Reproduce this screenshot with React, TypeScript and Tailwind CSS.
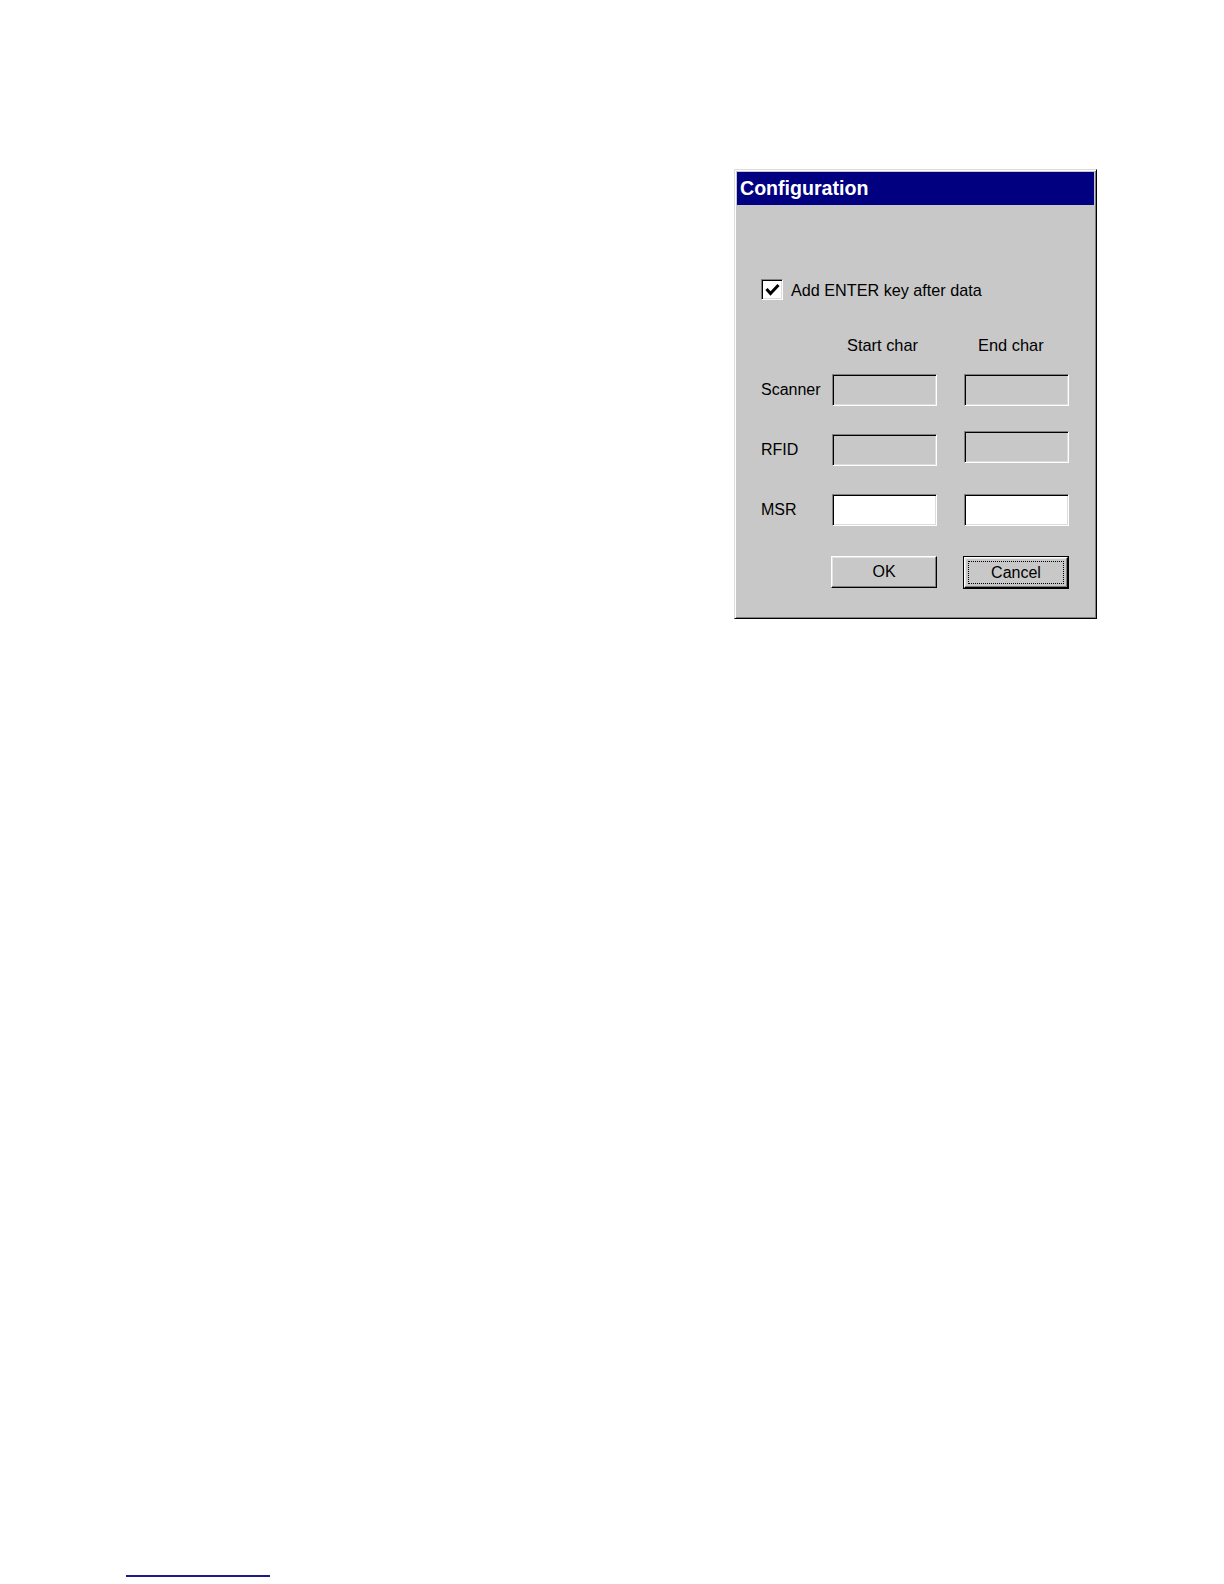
import React from "react";

const sunken =
  "border border-t-[#808080] border-l-[#808080] border-r-white border-b-white shadow-[inset_1px_1px_0_#000,inset_-1px_-1px_0_#dcdcdc]";
const raised =
  "border border-t-white border-l-white border-r-black border-b-black shadow-[inset_-1px_-1px_0_#808080,inset_1px_1px_0_#e4e4e4]";

function Field({ enabled, className = "" }: { enabled?: boolean; className?: string }) {
  return (
    <div
      className={`w-[105px] h-[32px] ${sunken} ${enabled ? "bg-white" : "bg-[#c8c8c8]"} ${className}`}
    />
  );
}

function Row({ label, enabled, shiftSecond }: { label: string; enabled?: boolean; shiftSecond?: boolean }) {
  return (
    <div className="flex items-center h-[32px]">
      <div className="w-[71px] text-[16px] leading-[20px] text-black">{label}</div>
      <Field enabled={enabled} />
      <Field enabled={enabled} className={`ml-[27px] ${shiftSecond ? "mb-[6px]" : ""}`} />
    </div>
  );
}

export default function App() {
  return (
    <div className="w-[1224px] h-[1584px] bg-white flex flex-col font-['Liberation_Sans',Arial,sans-serif]">
      <div className="pl-[734px] pt-[169px]">
        {/* dialog window */}
        <div className="w-[363px] h-[450px] p-[2px] bg-[#c8c8c8] border border-t-[#dcdcdc] border-l-[#dcdcdc] border-r-black border-b-black shadow-[inset_1px_1px_0_#fff,inset_-1px_-1px_0_#808080] flex flex-col">
          <div className="h-[33px] bg-[#000080] flex items-center pl-[3px]">
            <span className="text-white font-bold text-[19.6px] leading-none">Configuration</span>
          </div>

          <div className="flex flex-col pl-[24px]">
            {/* checkbox */}
            <div className="mt-[74px] flex items-center h-[21px]">
              <div className={`w-[22px] h-[21px] bg-white ${sunken} flex items-center justify-center`}>
                <svg width="15" height="13" viewBox="0 0 15 13" fill="none">
                  <polyline points="1.5,6 5.5,10.5 13.5,2" stroke="#000" strokeWidth="3" />
                </svg>
              </div>
              <span className="ml-[8px] text-[16.2px] leading-[20px] text-black">Add ENTER key after data</span>
            </div>

            {/* column headers */}
            <div className="mt-[35px] flex h-[20px] text-[16.4px] leading-[20px] text-black">
              <div className="w-[71px]" />
              <div className="w-[105px] pl-[15px]">Start char</div>
              <div className="w-[105px] ml-[27px] pl-[14px]">End char</div>
            </div>

            <div className="mt-[19px]">
              <Row label="Scanner" />
            </div>
            <div className="mt-[28px]">
              <Row label="RFID" shiftSecond />
            </div>
            <div className="mt-[28px]">
              <Row label="MSR" enabled />
            </div>

            {/* buttons */}
            <div className="mt-[30px] flex items-start pl-[70px]">
              <button
                className={`w-[106px] h-[32px] bg-[#c8c8c8] ${raised} text-[16px] leading-none text-black flex items-center justify-center`}
              >
                OK
              </button>
              <div className="ml-[26px] w-[106px] h-[33px] border border-black">
                <div className={`w-full h-full bg-[#c8c8c8] ${raised} p-[3px]`}>
                  <div className="w-full h-full border border-dotted border-black flex items-center justify-center text-[16px] leading-none text-black">
                    Cancel
                  </div>
                </div>
              </div>
            </div>
          </div>
        </div>
      </div>

      <div className="mt-auto mb-[7px] ml-[126px] w-[144px] h-[2px] bg-[#1a1a8a]" />
    </div>
  );
}
